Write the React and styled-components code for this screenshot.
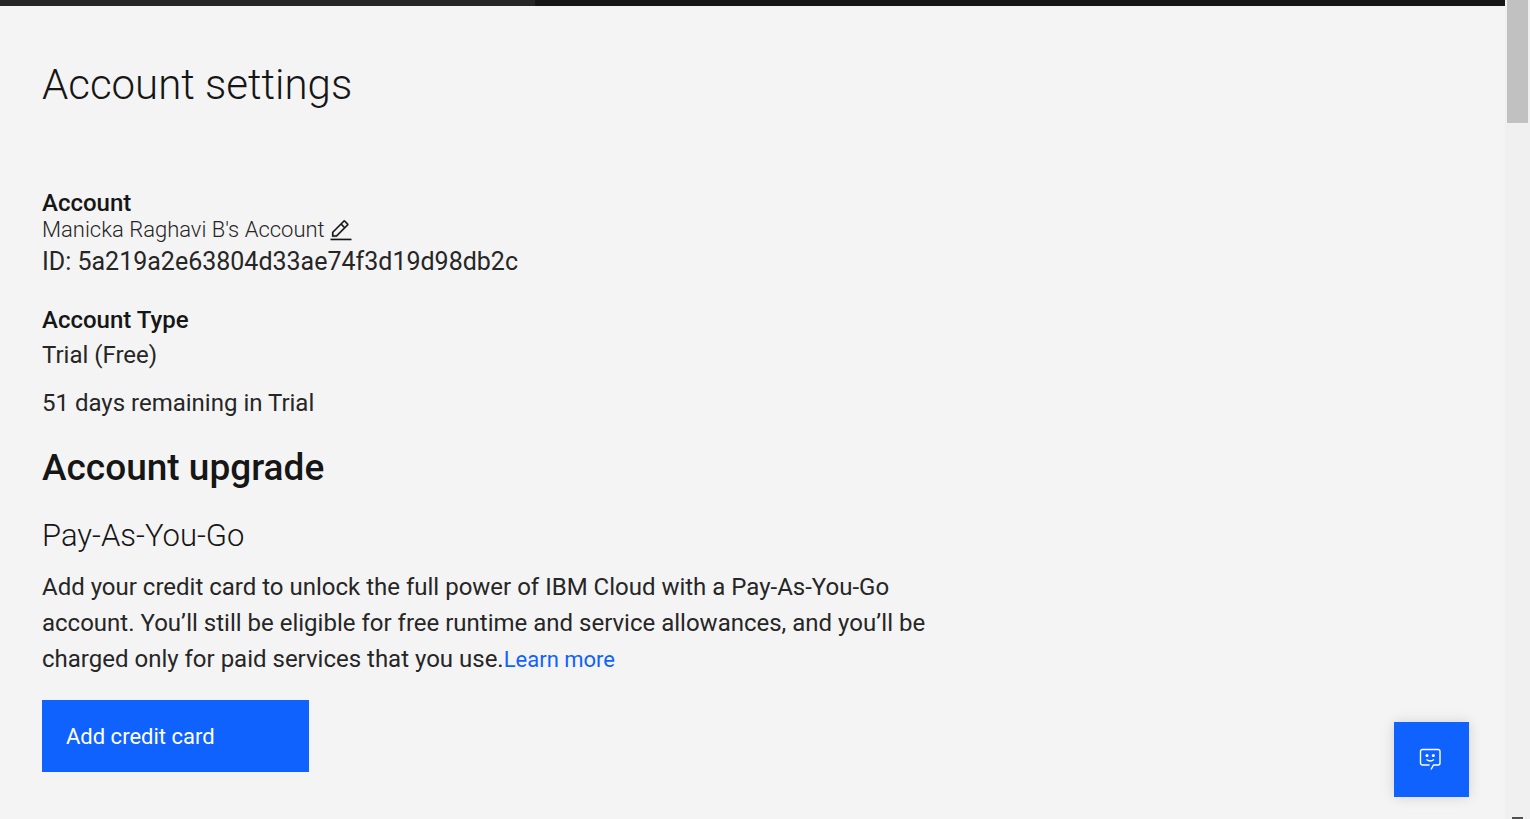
import React from "react";
import styled, { createGlobalStyle } from "styled-components";

const GlobalStyle = createGlobalStyle`
  * { box-sizing: border-box; }
  body {
    margin: 0;
    background: #f4f4f4;
    color: #161616;
    font-family: Roboto, "Noto Sans", sans-serif;
    font-size: 24px;
  }
  h1, h2, h3, p { margin: 0; }
`;

const Shell = styled.div`
  display: flex;
  height: 100vh;
  overflow: hidden;
`;

const Page = styled.div`
  flex: 1;
  min-width: 0;
`;

const HeaderEdge = styled.div`
  height: 6px;
  background: #161616;
`;

const HeaderMenu = styled.div`
  width: 535px;
  height: 6px;
  background: #262626;
`;

const Content = styled.main`
  padding: 54px 42px 48px;
`;

const Title = styled.h1`
  margin-bottom: 81px;
  font-size: 42px;
  line-height: 50px;
  font-weight: 300;
`;

const Label = styled.h2`
  font-size: 24px;
  line-height: 24px;
  font-weight: 500;
`;

const NameRow = styled.div`
  display: flex;
  align-items: center;
  gap: 4px;
  height: 30px;
`;

const Name = styled.span`
  font-size: 22px;
  line-height: 30px;
  font-weight: 300;
  color: #262626;
`;

const EditButton = styled.button`
  display: flex;
  padding: 0;
  border: 0;
  background: none;
  color: #161616;
  cursor: pointer;
`;

const AccountId = styled.p`
  font-size: 25px;
  line-height: 34px;
  color: #262626;
`;

const Text = styled.p`
  max-width: 910px;
  line-height: 36px;
  color: #262626;
`;

const Group = styled.section`
  margin-bottom: ${(p) => p.$gap}px;
`;

const TypeDetails = styled.div`
  display: grid;
  gap: 12px;
  padding-top: 5px;
`;

const SectionTitle = styled.h2`
  margin-bottom: 24px;
  font-size: 37px;
  line-height: 48px;
  font-weight: 500;
`;

const PlanTitle = styled.h3`
  margin-bottom: 13px;
  font-size: 31px;
  line-height: 40px;
  font-weight: 300;
`;

const Link = styled.a`
  font-size: 22px;
  line-height: 22px;
  font-weight: 400;
  color: #0f62fe;
  text-decoration: none;
`;

const PrimaryButton = styled.button`
  display: block;
  width: 267px;
  height: 72px;
  margin-top: 23px;
  padding: 0 24px;
  border: 0;
  background: #0f62fe;
  color: #fff;
  font: 400 22px Roboto, "Noto Sans", sans-serif;
  text-align: left;
  cursor: pointer;
`;

const FeedbackButton = styled.button`
  position: fixed;
  right: 61px;
  bottom: 22px;
  display: grid;
  place-items: center;
  width: 75px;
  height: 75px;
  padding: 0;
  border: 0;
  background: #0f62fe;
  color: #fff;
  box-shadow: 0 0 12px rgba(0, 0, 0, 0.14);
  cursor: pointer;
`;

const ScrollTrack = styled.div`
  display: flex;
  flex-direction: column;
  justify-content: space-between;
  align-items: center;
  width: 25px;
  background: #f0f0f0;
`;

const ScrollThumb = styled.div`
  width: 21px;
  height: 123px;
  background: #c1c1c1;
`;

const ScrollArrow = styled.div`
  width: 11px;
  height: 2px;
  background: #505050;
`;

const EditIcon = () => (
  <svg width="24" height="24" viewBox="0 0 32 32" fill="currentColor" aria-hidden="true">
    <path d="M2 27.500h28v2.200H2z" />
    <path d="M25.400 10c.8-.8.8-2 0-2.800l-3.600-3.600c-.8-.8-2-.8-2.800 0l-15 15V25h6.400l15-15zm-5-5L24 8.600l-3 3L17.400 8l3-3zM6 23v-3.600l10-10 3.600 3.600-10 10H6z" stroke="currentColor" strokeWidth=".3" />
  </svg>
);

const FeedbackIcon = () => (
  <svg width="25" height="25" viewBox="0 0 25 25" fill="none" stroke="currentColor" strokeWidth="1.400" aria-hidden="true">
    <path d="M10.500 18H3.500a2 2 0 0 1-2-2V4.500a2 2 0 0 1 2-2h15.500a2 2 0 0 1 2 2V16a2 2 0 0 1-2 2h-4.500l-2.500 4.500" />
    <path d="M7.500 12.500q3.750 3.200 7.500 0" />
    <circle cx="8" cy="8.500" r="1.500" fill="currentColor" stroke="none" />
    <circle cx="14.300" cy="8.500" r="1.500" fill="currentColor" stroke="none" />
  </svg>
);

export default function App() {
  return (
    <>
      <GlobalStyle />
      <Shell>
        <Page>
          <HeaderEdge>
            <HeaderMenu />
          </HeaderEdge>
          <Content>
            <Title>Account settings</Title>
            <Group $gap={29}>
              <Label>Account</Label>
              <NameRow>
                <Name>Manicka Raghavi B's Account</Name>
                <EditButton aria-label="Edit account name">
                  <EditIcon />
                </EditButton>
              </NameRow>
              <AccountId>ID: 5a219a2e63804d33ae74f3d19d98db2c</AccountId>
            </Group>
            <Group $gap={23}>
              <Label>Account Type</Label>
              <TypeDetails>
                <Text>Trial (Free)</Text>
                <Text>51 days remaining in Trial</Text>
              </TypeDetails>
            </Group>
            <section>
              <SectionTitle>Account upgrade</SectionTitle>
              <PlanTitle>Pay-As-You-Go</PlanTitle>
              <Text>
                Add your credit card to unlock the full power of IBM Cloud with a Pay-As-You-Go account.
                You’ll still be eligible for free runtime and service allowances, and you’ll be charged
                only for paid services that you use.<Link href="#learn-more">Learn more</Link>
              </Text>
              <PrimaryButton>Add credit card</PrimaryButton>
            </section>
          </Content>
        </Page>
        <ScrollTrack aria-hidden="true">
          <ScrollThumb />
          <ScrollArrow />
        </ScrollTrack>
      </Shell>
      <FeedbackButton aria-label="Feedback">
        <FeedbackIcon />
      </FeedbackButton>
    </>
  );
}
